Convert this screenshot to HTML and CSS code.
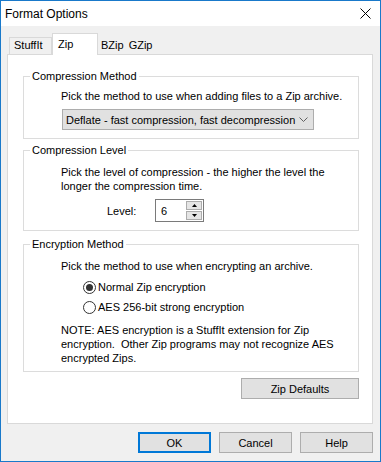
FILE: index.html
```html
<!DOCTYPE html>
<html lang="en">
<head>
  <meta charset="UTF-8">
  <title>Format Options</title>
  <link rel="stylesheet" href="styles.css">
</head>
<body>

<div class="window">
  <div class="titlebar">
    <span>Format Options</span>
    <svg class="close" width="11" height="11" viewBox="0 0 11 11">
      <path d="M0.5 0.5 L10.5 10.5 M10.5 0.5 L0.5 10.5" stroke="#000" stroke-width="1"/>
    </svg>
  </div>

  <div class="client">
    <div class="tabs">
      <div class="tab">StuffIt</div>
      <div class="tab active">Zip</div>
      <div class="tab plain">BZip</div>
      <div class="tab plain">GZip</div>
    </div>

    <div class="panel">
      <fieldset class="group">
        <legend>Compression Method</legend>
        <p class="info">Pick the method to use when adding files to a Zip archive.</p>
        <div class="combo">
          <span>Deflate - fast compression, fast decompression</span>
          <svg width="9" height="5" viewBox="0 0 9 5">
            <path d="M0.5 0.5 L4.5 4.5 L8.5 0.5" fill="none" stroke="#606060" stroke-width="1"/>
          </svg>
        </div>
      </fieldset>

      <fieldset class="group level-group">
        <legend>Compression Level</legend>
        <p class="info">Pick the level of compression - the higher the level the<br>longer the compression time.</p>
        <div class="spin-row">
          <label>Level:</label>
          <div class="spin">
            <span class="spin-value">6</span>
            <div class="spin-buttons">
              <div class="spin-btn"><svg width="5" height="3" viewBox="0 0 5 3"><path d="M2.5 0 L5 3 L0 3 Z" fill="#000"/></svg></div>
              <div class="spin-btn"><svg width="5" height="3" viewBox="0 0 5 3"><path d="M0 0 L5 0 L2.5 3 Z" fill="#000"/></svg></div>
            </div>
          </div>
        </div>
      </fieldset>

      <fieldset class="group enc-group">
        <legend>Encryption Method</legend>
        <p class="info">Pick the method to use when encrypting an archive.</p>
        <div class="radios">
          <div class="radio"><span class="dot checked"></span>Normal Zip encryption</div>
          <div class="radio"><span class="dot"></span>AES 256-bit strong encryption</div>
        </div>
        <p class="info note">NOTE: AES encryption is a StuffIt extension for Zip<br>encryption.&nbsp; Other Zip programs may not recognize AES<br>encrypted Zips.</p>
      </fieldset>

      <div class="defaults-row">
        <button class="btn defaults">Zip Defaults</button>
      </div>
    </div>

    <div class="actions">
      <button class="btn default">OK</button>
      <button class="btn">Cancel</button>
      <button class="btn">Help</button>
    </div>
  </div>
</div>

</body>
</html>
```

FILE: styles.css
```css
* { box-sizing: border-box; margin: 0; padding: 0; }
html, body {
  font-family: 'Liberation Sans', Arial, sans-serif;
  font-size: 11px;
  color: #000;
  background: #fff;
}
.window {
  width: 381px;
  height: 462px;
  border: 1px solid #1979ca;
  background: #f0f0f0;
  display: flex;
  flex-direction: column;
}
.titlebar {
  height: 25px;
  background: #fff;
  display: flex;
  align-items: center;
  justify-content: space-between;
  padding: 0 9px 0 4px;
  font-size: 12px;
}
.client {
  flex: 1;
  display: flex;
  flex-direction: column;
  padding: 7px 7px 0 6px;
}
.tabs {
  display: flex;
  align-items: flex-start;
  height: 22px;
  padding-left: 2px;
  margin-bottom: -1px;
  position: relative;
  z-index: 1;
}
.tab {
  height: 17px;
  margin-top: 4px;
  padding: 0 4px;
  line-height: 15px;
  border: 1px solid #d9d9d9;
  border-bottom: none;
  background: #f0f0f0;
}
.tab:first-child {
  width: 43px;
  padding-left: 4px;
}
.tab.active {
  height: 22px;
  margin-top: 0;
  width: 46px;
  padding-left: 5px;
  line-height: 20px;
  background: #fff;
}
.tab.plain {
  border-color: #f0f0f0;
  padding: 0 2px;
}
.tab.plain + .tab.plain {
  padding-left: 1px;
}
.panel {
  height: 370px;
  background: #fff;
  border: 1px solid #d9d9d9;
  padding: 14px 13px 0 15px;
  display: flex;
  flex-direction: column;
}
.group {
  border: 1px solid #dcdcdc;
  padding: 0 0 8px;
}
.group legend {
  margin-left: 6px;
  padding: 0 2px;
  line-height: 15px;
}
.level-group { margin-top: 4px; }
.enc-group { margin-top: 6px; padding-bottom: 6px; }
.info {
  margin: 5px 0 0 37px;
  line-height: 14px;
}
.level-group .info,
.enc-group .info { margin-top: 7px; }
.enc-group .note { margin-top: 6px; }
.combo {
  margin: 6px 0 0 38px;
  width: 252px;
  height: 21px;
  border: 1px solid #adadad;
  background: #e1e1e1;
  display: flex;
  align-items: center;
  justify-content: space-between;
  padding: 0 5px 0 3px;
}
.spin-row {
  margin: 6px 0 0 83px;
  display: flex;
  align-items: center;
  height: 23px;
}
.spin-row label {
  width: 48px;
}
.spin {
  width: 49px;
  height: 23px;
  border: 1px solid #7a7a7a;
  display: flex;
  justify-content: space-between;
  padding: 1px;
}
.spin-value {
  padding: 3px 0 0 4px;
  line-height: 14px;
}
.spin-buttons {
  width: 16px;
  display: flex;
  flex-direction: column;
  gap: 1px;
}
.spin-btn {
  flex: 1;
  border: 1px solid #acacac;
  background: #e5e5e5;
  display: flex;
  align-items: center;
  justify-content: center;
}
.radios {
  margin: 4px 0 0 59px;
}
.radio {
  height: 20px;
  display: flex;
  align-items: center;
}
.dot {
  width: 13px;
  height: 13px;
  border: 1px solid #333;
  border-radius: 50%;
  background: #fff;
  margin-right: 2px;
  display: flex;
  align-items: center;
  justify-content: center;
}
.dot.checked::after {
  content: "";
  width: 7px;
  height: 7px;
  border-radius: 50%;
  background: #333;
}
.defaults-row {
  display: flex;
  justify-content: flex-end;
  margin-top: 6px;
}
.btn {
  font-family: inherit;
  font-size: 11px;
  color: #000;
  height: 21px;
  width: 73px;
  border: 1px solid #adadad;
  background: #e1e1e1;
}
.btn.defaults {
  width: 118px;
}
.btn.default {
  border: 2px solid #0078d7;
}
.actions {
  display: flex;
  justify-content: flex-end;
  gap: 8px;
  margin-top: 8px;
}
```
